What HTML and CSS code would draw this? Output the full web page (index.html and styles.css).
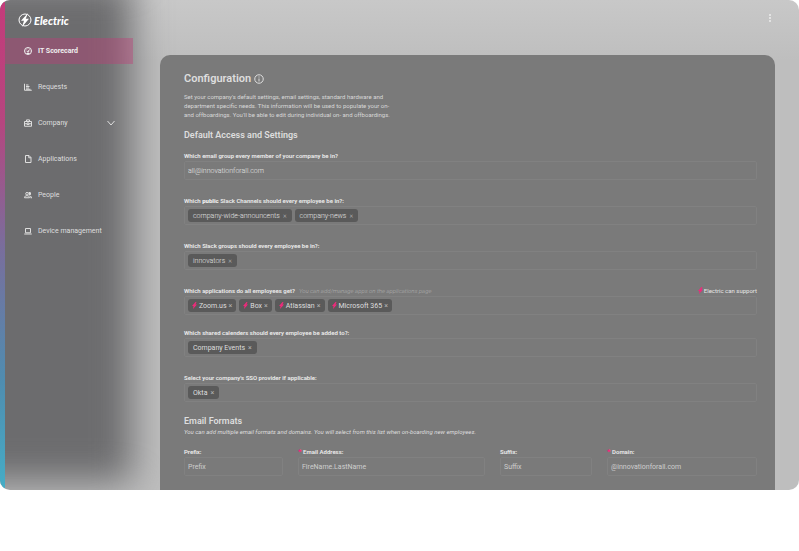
FILE: index.html
```html
<!DOCTYPE html>
<html lang="en">
  <head>
    <meta charset="UTF-8" />
    <meta name="viewport" content="width=device-width, initial-scale=1.0" />
    <title>Electric - Configuration</title>
    <link rel="stylesheet" href="styles.css">
  </head>
  <body>
    <!-- shared bolt shape -->
    <svg class="sprite" aria-hidden="true">
      <symbol id="bolt" viewBox="0 0 10 14">
        <path d="M7 0 0 8h3L2 14l8-9H7l2-5z" />
      </symbol>
    </svg>

    <div class="app">
      <aside class="sidebar">
        <a class="logo" href="#">
          <svg class="logo-mark" viewBox="0 0 28 28">
            <circle cx="14" cy="14" r="12" fill="none" stroke="currentColor" stroke-width="2" />
            <path d="M20 0 6 15.600h6L8 28l14-16.400h-6.500z" fill="currentColor" />
          </svg>
          <span>Electric</span>
        </a>
        <nav class="nav">
          <a class="nav-item active" href="#">
            <svg class="nav-icon" viewBox="0 0 16 16">
              <circle cx="8" cy="8" r="7" />
              <path d="M5 13h6M8 9l3-4M3.6 8h1.2M5 4.6l.7.8M8 3.2v1M11.6 8h1" />
              <circle cx="8" cy="9.4" r="1.2" />
            </svg>
            <span>IT Scorecard</span>
          </a>
          <a class="nav-item" href="#">
            <svg class="nav-icon" viewBox="0 0 16 16">
              <path d="M1 1.500v13h14.500M4 4h5M4 7h7M4 10h6M4 12.500h9" />
            </svg>
            <span>Requests</span>
          </a>
          <a class="nav-item" href="#">
            <svg class="nav-icon" viewBox="0 0 16 16">
              <path d="M1 5h14v9.500H1zM5 5V1.800h6V5M1 9.500h5M10 9.500h5M6 8h4v3H6z" />
            </svg>
            <span>Company</span>
            <svg class="chevron" viewBox="0 0 8 6">
              <path d="M.5 1 4 5l3.500-4" />
            </svg>
          </a>
          <a class="nav-item" href="#">
            <svg class="nav-icon" viewBox="0 0 16 16">
              <path d="M3 1h7l4 4v10H3zM9.500 1v4.500H14" />
            </svg>
            <span>Applications</span>
          </a>
          <a class="nav-item" href="#">
            <svg class="nav-icon" viewBox="0 0 16 16">
              <circle cx="6" cy="5.500" r="2.600" />
              <path d="M1 13.500c0-3 2-4 5-4s5 1 5 4z" />
              <path class="solid" d="M9 2.200a3.500 3.500 0 1 1 .8 6.500zM11.500 9.500c3 .3 4.500 2 4.500 5h-3c0-2-.3-4-1.500-5z" />
            </svg>
            <span>People</span>
          </a>
          <a class="nav-item" href="#">
            <svg class="nav-icon" viewBox="0 0 16 16">
              <path d="M3 3h10v8.500H3zM.5 14h15" />
            </svg>
            <span>Device management</span>
          </a>
        </nav>
      </aside>

      <main class="main">
        <header class="topbar">
          <button class="menu-button" type="button" aria-label="Menu">
            <svg viewBox="0 0 2 8">
              <circle cx="1" cy="1" r="1" />
              <circle cx="1" cy="4" r="1" />
              <circle cx="1" cy="7" r="1" />
            </svg>
          </button>
        </header>

        <form class="panel">
          <h1>
            Configuration
            <svg class="info" viewBox="0 0 20 20">
              <circle cx="10" cy="10" r="8.500" />
              <path d="M10 9v6M10 5v2" />
            </svg>
          </h1>
          <p class="intro">
            Set your company's default settings, email settings, standard hardware and<br>
            department specific needs. This information will be used to populate your on-<br>
            and offboardings. You'll be able to edit during individual on- and offboardings.
          </p>

          <h2>Default Access and Settings</h2>

          <div class="field">
            <label for="group">Which email group every member of your company be in?</label>
            <input id="group" class="box light" type="text" value="all@innovationforall.com">
          </div>

          <div class="field">
            <label for="channels">Which <b>public</b> Slack Channels should every employee be in?:</label>
            <div class="box tags">
              <span class="tag light">company-wide-announcents <button type="button">×</button></span>
              <span class="tag light">company-news <button type="button">×</button></span>
              <input id="channels" type="text">
            </div>
          </div>

          <div class="field">
            <label for="slack">Which Slack groups should every employee be in?:</label>
            <div class="box tags">
              <span class="tag light">innovators <button type="button">×</button></span>
              <input id="slack" type="text">
            </div>
          </div>

          <div class="field apps">
            <div class="label-row">
              <label for="apps">Which applications do all employees get?</label>
              <em>You can add/manage apps on the applications page</em>
              <span class="support"><svg class="bolt"><use href="#bolt" /></svg>Electric can support</span>
            </div>
            <div class="box tags">
              <span class="tag"><svg class="bolt"><use href="#bolt" /></svg>Zoom.us <button type="button">×</button></span>
              <span class="tag"><svg class="bolt"><use href="#bolt" /></svg>Box <button type="button">×</button></span>
              <span class="tag"><svg class="bolt"><use href="#bolt" /></svg>Atlassian <button type="button">×</button></span>
              <span class="tag"><svg class="bolt"><use href="#bolt" /></svg>Microsoft 365 <button type="button">×</button></span>
              <input id="apps" type="text">
            </div>
          </div>

          <div class="field">
            <label for="calendars">Which shared calenders should every employee be added to?:</label>
            <div class="box tags">
              <span class="tag">Company Events <button type="button">×</button></span>
              <input id="calendars" type="text">
            </div>
          </div>

          <div class="field">
            <label for="sso">Select your company's SSO provider if applicable:</label>
            <div class="box tags">
              <span class="tag">Okta <button type="button">×</button></span>
              <input id="sso" type="text">
            </div>
          </div>

          <h2 class="formats-title">Email Formats</h2>
          <p class="hint">You can add multiple email formats and domains. You will select from this list when on-boarding new employees.</p>

          <div class="formats">
            <div>
              <label for="prefix">Prefix:</label>
              <input id="prefix" class="box" type="text" placeholder="Prefix">
            </div>
            <div>
              <label for="address"><span class="required">*</span> Email Address:</label>
              <input id="address" class="box" type="text" placeholder="FireName.LastName">
            </div>
            <div>
              <label for="suffix">Suffix:</label>
              <input id="suffix" class="box" type="text" placeholder="Suffix">
            </div>
            <div>
              <label for="domain"><span class="required">*</span> Domain:</label>
              <input id="domain" class="box" type="text" placeholder="@innovationforall.com">
            </div>
          </div>
        </form>
      </main>
    </div>
  </body>
</html>
```
FILE: styles.css
```css
* {
  box-sizing: border-box;
}
body {
  margin: 0;
  background: #fff;
  color: #dedede;
  font-family: Roboto, "Liberation Sans", sans-serif;
  font-size: 7px;
}
a {
  color: inherit;
  text-decoration: none;
}
button,
input {
  padding: 0;
  border: 0;
  background: none;
  color: inherit;
  font: inherit;
}
.sprite {
  display: none;
}
.app {
  display: grid;
  grid-template-columns: 160px 1fr;
  position: relative;
  isolation: isolate;
  overflow: hidden;
  border-radius: 10px;
  background: linear-gradient(#c8c8c8, #bebebe 60px);
}
/* soft dark shade behind the menu */
.app::before {
  content: "";
  position: absolute;
  z-index: -1;
  top: -20px;
  bottom: 8px;
  left: -60px;
  width: 192px;
  background: #6c6c6e;
  filter: blur(18px);
}
/* coloured strip on the left edge */
.app::after {
  content: "";
  position: absolute;
  top: 0;
  bottom: 0;
  left: 0;
  width: 5px;
  background: linear-gradient(#c43b7a, #b5467f 25%, #7a6d9c 50%, #4f8db0 78%, #45adc6);
}

/* Sidebar */
.logo {
  display: flex;
  align-items: center;
  gap: 2px;
  height: 38px;
  padding: 2px 0 0 18px;
  color: #fff;
  font-family: Lato, sans-serif;
  font-size: 11px;
  font-weight: 900;
  font-style: italic;
}
.logo-mark {
  width: 14px;
  height: 14px;
}
.nav {
  display: flex;
  flex-direction: column;
  gap: 10px;
  margin: 0 27px 0 5px;
}
.nav-item {
  display: flex;
  align-items: center;
  gap: 6px;
  height: 26px;
  padding: 0 18px 0 19px;
}
.nav-item.active {
  background: rgba(192, 60, 120, 0.4);
  color: #f0f0f0;
  font-weight: 700;
}
.nav-icon {
  width: 8px;
  height: 8px;
  fill: none;
  stroke: currentColor;
  stroke-width: 2;
}
.nav-icon .solid {
  fill: currentColor;
  stroke: none;
}
.chevron {
  width: 8px;
  height: 6px;
  margin-left: auto;
  fill: none;
  stroke: currentColor;
}

/* Main */
.main {
  padding-right: 24px;
}
.topbar {
  display: flex;
  justify-content: flex-end;
  height: 55px;
  padding-top: 14px;
}
.menu-button {
  width: 10px;
  height: 8px;
}
.menu-button svg {
  display: block;
  width: 2px;
  height: 8px;
  margin: 0 auto;
  fill: #ececec;
}
.panel {
  padding: 17px 18px 14px 24px;
  border-radius: 10px 10px 0 0;
  background: #7a7a7a;
}
h1,
h2,
p {
  margin: 0;
}
h1 {
  display: flex;
  align-items: center;
  gap: 3px;
  font-size: 11px;
  line-height: 14px;
  font-weight: 600;
}
.info {
  width: 10px;
  height: 10px;
  fill: none;
  stroke: currentColor;
  stroke-width: 2;
}
.intro {
  margin: 6px 0 10px;
  color: #d8d8d8;
  font-size: 6px;
  line-height: 9px;
}
h2 {
  font-size: 9px;
  line-height: 12px;
  font-weight: 600;
}
h2 + .field {
  margin-top: 9px;
}
.field {
  margin-bottom: 15px;
}
.field.apps {
  margin-bottom: 12px;
}
label {
  display: block;
  color: #ececec;
  font-size: 6px;
  line-height: 11px;
  font-weight: 600;
}
label b {
  font-weight: 900;
}
.label-row {
  display: flex;
  gap: 4px;
  font-size: 6px;
  line-height: 11px;
}
.label-row em {
  color: #b0b0b0;
  font-weight: 300;
}
.support {
  display: flex;
  align-items: center;
  gap: 1px;
  margin-left: auto;
  color: #e6e6e6;
}
.box {
  display: block;
  width: 100%;
  height: 19px;
  padding: 0 3px;
  border: 1px solid #818181;
  border-radius: 2px;
}
.light {
  color: #e6e6e6;
  font-weight: 300;
}
.box::placeholder {
  color: #cecece;
  opacity: 1;
}
.tags {
  display: flex;
  align-items: center;
  gap: 3px;
}
.tags input {
  flex: 1;
  min-width: 0;
}
.tag {
  display: flex;
  align-items: center;
  gap: 3px;
  height: 13px;
  padding: 0 5px;
  border-radius: 3px;
  background: #5a5a5a;
}
.apps .tag {
  gap: 2px;
  padding: 0 4px;
}
.tag button {
  color: #b4b4b4;
  font-size: 7px;
}
.bolt {
  width: 5px;
  height: 7px;
  fill: #ee2a7b;
}
.hint {
  margin-bottom: 9px;
  font-size: 6px;
  line-height: 10px;
  font-style: italic;
}
.formats-title {
  margin-top: -2px;
}
.formats {
  display: grid;
  grid-template-columns: 99fr 187fr 92fr 150fr;
  gap: 15px;
}
.required {
  color: #ff1f7a;
  font-size: 8px;
  line-height: 1;
}
```
